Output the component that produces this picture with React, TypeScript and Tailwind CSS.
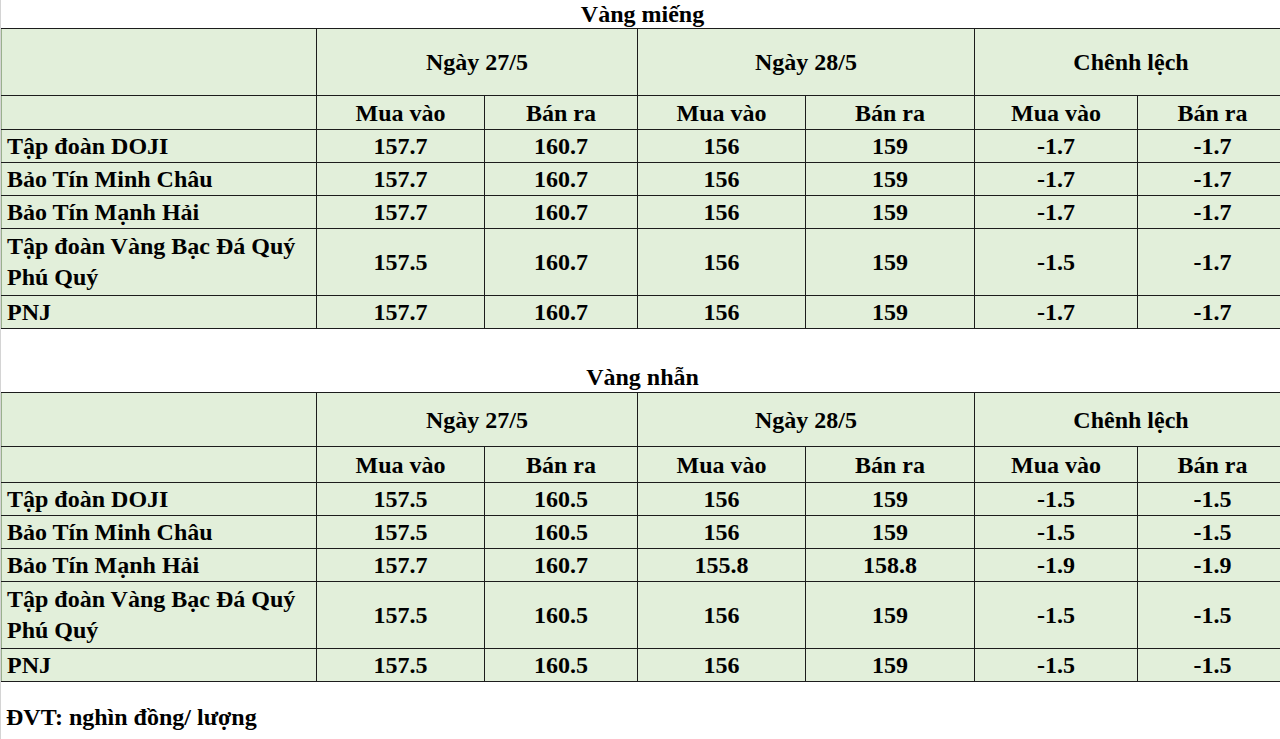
type Row = { name: string[]; v: string[]; tall?: boolean }

const mieng: Row[] = [
  { name: ['Tập đoàn DOJI'], v: ['157.7', '160.7', '156', '159', '-1.7', '-1.7'] },
  { name: ['Bảo Tín Minh Châu'], v: ['157.7', '160.7', '156', '159', '-1.7', '-1.7'] },
  { name: ['Bảo Tín Mạnh Hải'], v: ['157.7', '160.7', '156', '159', '-1.7', '-1.7'] },
  { name: ['Tập đoàn Vàng Bạc Đá Quý', 'Phú Quý'], v: ['157.5', '160.7', '156', '159', '-1.5', '-1.7'], tall: true },
  { name: ['PNJ'], v: ['157.7', '160.7', '156', '159', '-1.7', '-1.7'] },
]

const nhan: Row[] = [
  { name: ['Tập đoàn DOJI'], v: ['157.5', '160.5', '156', '159', '-1.5', '-1.5'] },
  { name: ['Bảo Tín Minh Châu'], v: ['157.5', '160.5', '156', '159', '-1.5', '-1.5'] },
  { name: ['Bảo Tín Mạnh Hải'], v: ['157.7', '160.7', '155.8', '158.8', '-1.9', '-1.9'] },
  { name: ['Tập đoàn Vàng Bạc Đá Quý', 'Phú Quý'], v: ['157.5', '160.5', '156', '159', '-1.5', '-1.5'], tall: true },
  { name: ['PNJ'], v: ['157.5', '160.5', '156', '159', '-1.5', '-1.5'] },
]

const widths = [315, 168, 153, 168, 169, 163, 150]
const cell = 'border border-[#1c1c1c] p-0'

const PriceTable = ({ rows, head1, head2 }: { rows: Row[]; head1: string; head2: string }) => (
  <table className="border-collapse table-fixed w-[1286px] bg-[#e2efda] border-t border-t-[#8a8a8a]">
    <colgroup>
      {widths.map((w, i) => (
        <col key={i} style={{ width: w }} />
      ))}
    </colgroup>
    <tbody>
      <tr className={head1}>
        <td className={`${cell} border-l-[#9ab08d]`} />
        <td colSpan={2} className={`${cell} text-center`}>Ngày 27/5</td>
        <td colSpan={2} className={`${cell} text-center`}>Ngày 28/5</td>
        <td colSpan={2} className={`${cell} text-center`}>Chênh lệch</td>
      </tr>
      <tr className={head2}>
        <td className={`${cell} border-l-[#9ab08d]`} />
        {['Mua vào', 'Bán ra', 'Mua vào', 'Bán ra', 'Mua vào', 'Bán ra'].map((t, i) => (
          <td key={i} className={`${cell} text-center`}>{t}</td>
        ))}
      </tr>
      {rows.map((r, i) => (
        <tr key={i} className={r.tall ? 'h-[67px]' : 'h-[33px]'}>
          <td className={`${cell} border-l-[#9ab08d] pl-[5px] leading-[31px]`}>
            {r.name.map((n, j) => (
              <div key={j}>{n}</div>
            ))}
          </td>
          {r.v.map((x, j) => (
            <td key={j} className={`${cell} text-center`}>{x}</td>
          ))}
        </tr>
      ))}
    </tbody>
  </table>
)

export default function App() {
  return (
    <div className="w-[1280px] h-[739px] overflow-hidden bg-white border-l border-[#d4d4d4] text-black font-bold text-[24px] leading-none font-['Liberation_Serif','Times_New_Roman',serif]">
      <div className="h-[28px] flex items-center justify-center pl-[4px]">Vàng miếng</div>
      <PriceTable rows={mieng} head1="h-[67px]" head2="h-[34px]" />
      <div className="h-[33px]" />
      <div className="h-[30px] flex items-center justify-center pl-[4px]">Vàng nhẫn</div>
      <PriceTable rows={nhan} head1="h-[54px]" head2="h-[36px]" />
      <div className="pl-[5px] pt-[23px]">ĐVT: nghìn đồng/ lượng</div>
    </div>
  )
}
